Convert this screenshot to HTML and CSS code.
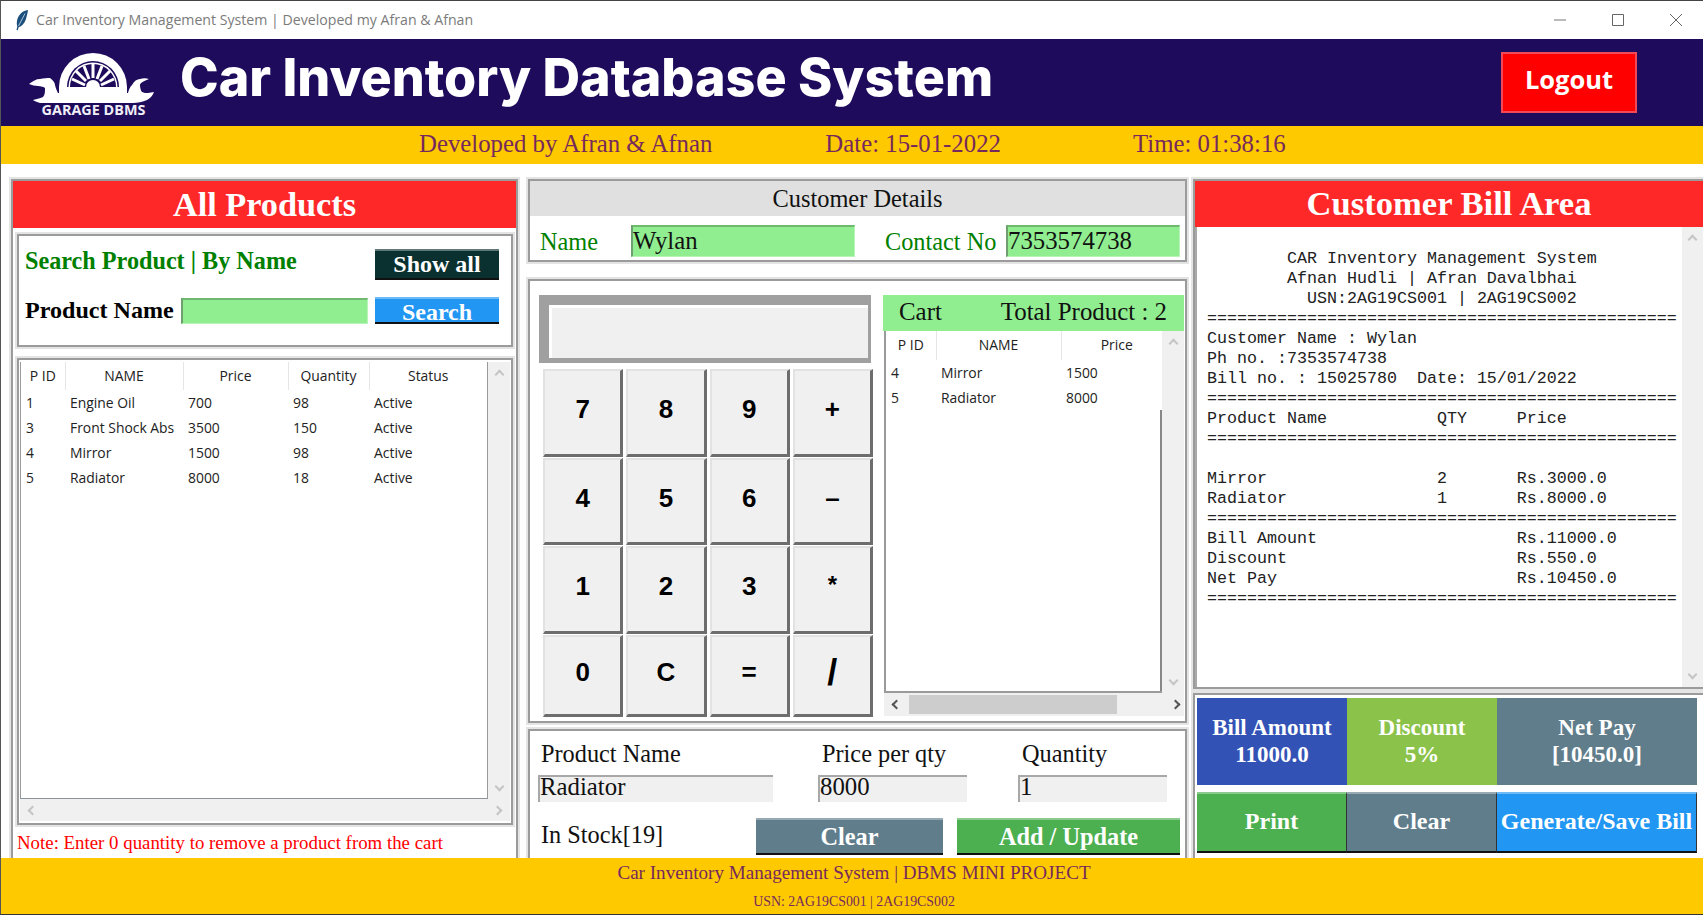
FILE: index.html
```html
<!DOCTYPE html>
<html lang="en">
<head>
    <meta charset="UTF-8">
    <meta name="viewport" content="width=device-width, initial-scale=1.0">
    <title>Car Inventory Management System</title>
    <link rel="stylesheet" href="styles.css">
</head>
<body>
    <div class="titlebar">
        <svg class="feather" width="14" height="22" viewBox="0 0 14 22">
            <path d="M13 1C7 2 3 6 2 12c-.4 2.400-.2 4 .3 5.500L1.500 21l1.300.3.800-3c3-1 6-4 7.400-8.300C11.800 6.500 12.800 3.500 13 1Z" fill="#1d4f7c"/>
            <path d="M10 4.500 3.500 17" stroke="#a9c6de" stroke-width="1" fill="none"/>
        </svg>
        <span class="titlebar-text">Car Inventory Management System | Developed my Afran &amp; Afnan</span>
        <div class="win-controls">
            <svg width="14" height="14" viewBox="0 0 14 14"><path d="M1 7h12" stroke="#777" fill="none"/></svg>
            <svg width="14" height="14" viewBox="0 0 14 14"><path d="M1.500 1.500h11v11h-11z" stroke="#666" fill="none"/></svg>
            <svg width="14" height="14" viewBox="0 0 14 14"><path d="M1 1l12 12M13 1 1 13" stroke="#666" fill="none"/></svg>
        </div>
    </div>

    <header class="header">
        <svg class="logo" width="135" height="77" viewBox="0 0 135 77">
            <path d="M34 42A34 34 0 0 1 102 42V52H34Z" fill="#fff"/>
            <path d="M42 42A26 26 0 0 1 94 42Z" fill="#1e0b5c"/>
            <path d="M43.500 42A24.500 24.500 0 0 1 92.500 42Z" fill="#fff"/>
            <path d="M45 42A23 23 0 0 1 91 42Z" fill="#1e0b5c"/>
            <g stroke="#fff" stroke-width="3" fill="none">
                <path d="M60 40 47 34M61 36 51 26M64 34 59 21M68 33V19M72 34 77 21M75 36 85 26M76 40 89 34"/>
            </g>
            <path d="M61 42a7 7 0 0 1 14 0Z" fill="#fff"/>
            <path d="M4 39C8 36 11 34 15 34C19 33 22 33 25 33C28 35 30 38 30 40C31 44 32 46 33 48H103C104 44 105 42 107 40C109 36 112 34 115 34C118 33 121 33 124 34C119 36 115 38 115 40C115 43 116 46 117 47C119 48 121 48 123 48L129 47C127 52 124 54 122 55C118 57 112 58 108 58H28C24 58 19 58 15 58C12 57 9 56 8 55C12 54 16 53 18 52C20 50 20 46 20 43C19 42 16 41 13 41C10 41 7 40 4 39Z" fill="#fff"/>
            <text x="68.500" y="70" class="logo-text" text-anchor="middle">GARAGE DBMS</text>
        </svg>
        <h1 class="app-title">Car Inventory Database System</h1>
        <button class="logout">Logout</button>
    </header>

    <div class="infobar">
        <span class="info-dev">Developed by Afran &amp; Afnan</span>
        <span class="info-date">Date: 15-01-2022</span>
        <span class="info-time">Time: 01:38:16</span>
    </div>

    <main class="main">
        <section class="frame col-left">
            <h2 class="panel-title">All Products</h2>
            <div class="frame search-box">
                <div class="search-row">
                    <span class="search-title">Search Product | By Name</span>
                    <button class="btn btn-dark">Show all</button>
                </div>
                <div class="search-row">
                    <label class="search-label">Product Name</label>
                    <input class="entry-green search-input" type="text">
                    <button class="btn btn-blue">Search</button>
                </div>
            </div>
            <div class="frame product-list">
                <div class="tree product-tree">
                    <table class="grid-table">
                        <colgroup>
                            <col class="col-a"><col class="col-b"><col class="col-c"><col class="col-d"><col>
                        </colgroup>
                        <thead>
                            <tr><th>P ID</th><th>NAME</th><th>Price</th><th>Quantity</th><th>Status</th></tr>
                        </thead>
                        <tbody>
                            <tr><td>1</td><td>Engine Oil</td><td>700</td><td>98</td><td>Active</td></tr>
                            <tr><td>3</td><td>Front Shock Abs</td><td>3500</td><td>150</td><td>Active</td></tr>
                            <tr><td>4</td><td>Mirror</td><td>1500</td><td>98</td><td>Active</td></tr>
                            <tr><td>5</td><td>Radiator</td><td>8000</td><td>18</td><td>Active</td></tr>
                        </tbody>
                    </table>
                </div>
                <div class="vscroll"><i class="chev up"></i><i class="chev down"></i></div>
                <div class="hscroll"><i class="chev left"></i><i class="chev right"></i></div>
            </div>
            <p class="note">Note: Enter 0 quantity to remove a product from the cart</p>
        </section>

        <div class="col-center">
            <section class="frame customer">
                <h3 class="customer-title">Customer Details</h3>
                <div class="customer-row">
                    <label class="cust-label name-label">Name</label>
                    <input class="entry-green name-input" type="text" value="Wylan">
                    <label class="cust-label contact-label">Contact No</label>
                    <input class="entry-green contact-input" type="text" value="7353574738">
                </div>
            </section>

            <section class="frame calc-cart">
                <div class="calc">
                    <input class="calc-display" type="text">
                    <div class="calc-keys">
                        <button class="key">7</button><button class="key">8</button><button class="key">9</button><button class="key">+</button>
                        <button class="key">4</button><button class="key">5</button><button class="key">6</button><button class="key">–</button>
                        <button class="key">1</button><button class="key">2</button><button class="key">3</button><button class="key key-star">*</button>
                        <button class="key">0</button><button class="key">C</button><button class="key">=</button><button class="key key-slash">/</button>
                    </div>
                </div>
                <div class="cart">
                    <div class="cart-head"><span>Cart</span><span>Total Product : 2</span></div>
                    <div class="cart-body">
                        <div class="tree cart-tree">
                            <table class="grid-table">
                                <colgroup><col class="cart-a"><col class="cart-b"><col></colgroup>
                                <thead><tr><th>P ID</th><th>NAME</th><th>Price</th></tr></thead>
                                <tbody>
                                    <tr><td>4</td><td>Mirror</td><td>1500</td></tr>
                                    <tr><td>5</td><td>Radiator</td><td>8000</td></tr>
                                </tbody>
                            </table>
                        </div>
                        <div class="vscroll"><i class="chev up"></i><i class="chev down"></i></div>
                        <div class="hscroll active">
                            <i class="chev left"></i>
                            <span class="thumb"></span>
                            <i class="chev right"></i>
                        </div>
                    </div>
                </div>
            </section>

            <section class="frame cart-form">
                <div class="form-grid">
                    <label class="form-label">Product Name</label>
                    <label class="form-label">Price per qty</label>
                    <label class="form-label">Quantity</label>
                    <input class="entry-grey" type="text" value="Radiator">
                    <input class="entry-grey" type="text" value="8000">
                    <input class="entry-grey" type="text" value="1">
                </div>
                <div class="form-actions">
                    <span class="form-label stock">In Stock[19]</span>
                    <button class="btn btn-grey form-clear">Clear</button>
                    <button class="btn btn-green form-add">Add / Update</button>
                </div>
            </section>
        </div>

        <div class="col-right">
            <section class="frame bill">
                <h2 class="panel-title bill-title">Customer Bill Area</h2>
                <div class="bill-body">
<pre class="bill-text">        CAR Inventory Management System
        Afnan Hudli | Afran Davalbhai
          USN:2AG19CS001 | 2AG19CS002
===============================================
Customer Name : Wylan
Ph no. :7353574738
Bill no. : 15025780  Date: 15/01/2022
===============================================
Product Name           QTY     Price
===============================================

Mirror                 2       Rs.3000.0
Radiator               1       Rs.8000.0
===============================================
Bill Amount                    Rs.11000.0
Discount                       Rs.550.0
Net Pay                        Rs.10450.0
===============================================</pre>
                    <div class="vscroll"><i class="chev up"></i><i class="chev down"></i></div>
                </div>
            </section>
            <section class="frame totals">
                <div class="totals-grid">
                    <div class="total total-blue">Bill Amount<br>11000.0</div>
                    <div class="total total-lime">Discount<br>5%</div>
                    <div class="total total-grey">Net Pay<br>[10450.0]</div>
                    <button class="btn btn-green">Print</button>
                    <button class="btn btn-grey">Clear</button>
                    <button class="btn btn-blue">Generate/Save Bill</button>
                </div>
            </section>
        </div>
    </main>

    <footer class="footer">
        <p class="footer-main">Car Inventory Management System | DBMS MINI PROJECT</p>
        <p class="footer-sub">USN: 2AG19CS001 | 2AG19CS002</p>
    </footer>
</body>
</html>
```

FILE: styles.css
```css
* {
    box-sizing: border-box;
}
html, body {
    margin: 0;
    padding: 0;
}
body {
    width: 1703px;
    height: 915px;
    overflow: hidden;
    display: flex;
    flex-direction: column;
    background: #fff;
    border-top: 1px solid #444;
    border-left: 1px solid #555;
    border-bottom: 1px solid #333;
    font-family: "Liberation Serif", serif;
    position: relative;
}
body::before {
    content: "";
    position: absolute;
    top: -1px;
    left: 800px;
    width: 60px;
    height: 1px;
    background: #21b67f;
}

/* window title */
.titlebar {
    height: 38px;
    flex: none;
    display: flex;
    align-items: center;
    padding-left: 14px;
    color: #7b7b7b;
    font-family: "Open Sans", sans-serif;
    font-size: 14.150px;
}
.titlebar-text {
    margin-left: 7px;
    padding-bottom: 2px;
}
.win-controls {
    margin-left: auto;
    display: flex;
    gap: 44px;
    padding-right: 20px;
}

/* header */
.header {
    height: 87px;
    flex: none;
    display: flex;
    align-items: center;
    background: #1e0b5c;
    position: relative;
    padding-left: 24px;
}
.logo {
    flex: none;
    margin-top: 1px;
}
.logo-text {
    font-family: "Open Sans", sans-serif;
    font-weight: 700;
    font-size: 14.400px;
    fill: #f0eef6;
}
.app-title {
    margin: 0 0 10px 20px;
    color: #fff;
    font-family: Inter, sans-serif;
    font-weight: 800;
    font-size: 52px;
    white-space: nowrap;
}
.logout {
    position: absolute;
    left: 1500px;
    top: 13px;
    width: 136px;
    height: 61px;
    background: #fe0000;
    border: 2px solid #f14a56;
    color: #fff;
    font-family: "Open Sans", sans-serif;
    font-weight: 700;
    font-size: 25.500px;
    padding: 0 0 8px;
}
.infobar {
    height: 38px;
    flex: none;
    background: #ffc900;
    color: #76295c;
    font-size: 24.800px;
    display: flex;
    align-items: center;
    line-height: 1;
    padding-bottom: 2px;
}
.info-dev {
    margin-left: 418px;
}
.info-date {
    margin-left: 113px;
}
.info-time {
    margin-left: 132px;
}

/* main area */
.main {
    height: 694px;
    flex: none;
    display: flex;
    align-items: flex-start;
    padding: 15px 0 0 10px;
    overflow: hidden;
}
.frame {
    border: 2px solid #9b9b9b;
    box-shadow: 0 0 0 2px #e4e4e4;
    background: #fff;
}
.col-left {
    width: 507px;
    height: 700px;
    margin-right: 10px;
    flex: none;
    padding: 0 0;
}
.col-center {
    width: 659px;
    margin-right: 6px;
    flex: none;
}
.col-right {
    width: 510px;
    flex: none;
}
.panel-title {
    margin: 0;
    height: 47px;
    background: #ff2828;
    color: #fff;
    text-align: center;
    font-size: 34.300px;
    line-height: 47px;
    font-weight: 700;
}

/* search */
.search-box {
    margin: 6px 3px 0 4px;
    height: 113px;
    padding: 13px 12px 0 6px;
}
.search-row {
    display: flex;
    align-items: center;
    height: 27px;
    margin-bottom: 17px;
}
.search-row:first-child {
    height: 31px;
}
.search-title {
    color: #008000;
    font-weight: 700;
    font-size: 24.200px;
    width: 350px;
    padding-bottom: 8px;
    white-space: nowrap;
}
.search-label {
    color: #000;
    font-weight: 700;
    font-size: 24.100px;
    width: 156px;
    white-space: nowrap;
}
.search-input {
    width: 187px;
    height: 26px;
    margin-right: 7px;
}
.btn {
    font-family: "Liberation Serif", serif;
    font-weight: 700;
    color: #fff;
    border: 0;
    border-top: 2px solid rgba(255, 255, 255, 0.35);
    border-bottom: 2px solid #111;
    padding: 0;
    font-size: 24.300px;
    white-space: nowrap;
}
.search-row .btn {
    width: 124px;
    height: 100%;
    font-size: 24px;
    margin-left: auto;
}
.search-row .btn-blue {
    padding-bottom: 4px;
}
.btn-dark {
    background: #0a3130;
}
.btn-blue {
    background: #2196f3;
}
.btn-grey {
    background: #607d8b;
}
.btn-green {
    background: #4caf50;
}
.entry-green {
    background: #90ee90;
    border: 0;
    border-top: 2px solid #6fb86f;
    border-left: 2px solid #6f9f6f;
    border-right: 1px solid #b8f4b8;
    border-bottom: 1px solid #b8f4b8;
    padding: 0;
    font-family: "Liberation Serif", serif;
    font-size: 24.800px;
    color: #111;
    outline: none;
}
.entry-grey {
    background: #f0f0f0;
    border: 0;
    border-top: 2px solid #a8a8a8;
    border-left: 2px solid #a8a8a8;
    padding: 0 0 5px;
    width: 100%;
    height: 27px;
    font-family: "Liberation Serif", serif;
    font-size: 24.800px;
    color: #111;
    outline: none;
}

/* treeview */
.product-list {
    margin: 11px 3px 0 4px;
    height: 467px;
    display: grid;
    grid-template-columns: 468px 22px;
    grid-template-rows: 437px 22px;
    padding: 2px 0 0 1px;
}
.tree {
    background: #fff;
    border-left: 1px solid #9a9a9a;
    border-bottom: 1px solid #8a949c;
    border-right: 1px solid #9a9a9a;
    overflow: hidden;
}
.grid-table {
    border-collapse: collapse;
    table-layout: fixed;
    width: 100%;
    font-family: "Open Sans", sans-serif;
    font-size: 13.900px;
    color: #222;
}
.grid-table th {
    font-weight: 400;
    height: 28px;
    border-right: 1px solid #e6e6e6;
    padding: 0 0 2px;
}
.grid-table th:last-child {
    border-right: 0;
}
.grid-table td {
    height: 25px;
    padding: 0 0 0 5px;
    white-space: nowrap;
}
.col-a {
    width: 44px;
}
.col-b {
    width: 118px;
}
.col-c {
    width: 105px;
}
.col-d {
    width: 81px;
}
.vscroll {
    background: #f0f0f0;
    display: flex;
    flex-direction: column;
    justify-content: space-between;
    align-items: center;
    padding: 9px 0;
}
.hscroll {
    grid-column: 1 / -1;
    background: #f0f0f0;
    display: flex;
    justify-content: space-between;
    align-items: center;
    padding: 0 9px;
}
.chev {
    display: block;
    width: 7px;
    height: 7px;
    border-top: 2px solid #c4c4c4;
    border-left: 2px solid #c4c4c4;
}
.chev.up {
    transform: rotate(45deg);
}
.chev.down {
    transform: rotate(225deg);
}
.chev.left {
    transform: rotate(-45deg);
}
.chev.right {
    transform: rotate(135deg);
}
.note {
    margin: 7px 0 0 4px;
    color: #ff0000;
    font-size: 18.850px;
    line-height: 22px;
    white-space: nowrap;
}

/* customer */
.customer {
    height: 83px;
}
.customer-title {
    margin: 0;
    height: 35px;
    background: #e0e0e0;
    text-align: center;
    font-weight: 400;
    font-size: 24.400px;
    line-height: 35px;
    color: #111;
}
.customer-row {
    display: flex;
    align-items: center;
    padding: 9px 0 0 10px;
    height: 41px;
}
.customer-row input {
    height: 32px;
    line-height: 28px;
    padding-bottom: 2px;
}
.cust-label {
    color: #008000;
    font-size: 24.300px;
    padding-top: 1px;
}
.name-label {
    width: 91px;
}
.name-input {
    width: 224px;
}
.contact-label {
    width: 121px;
    margin-left: 30px;
    white-space: nowrap;
}
.contact-input {
    width: 174px;
}

/* calculator and cart */
.calc-cart {
    height: 444px;
    margin-top: 17px;
    display: flex;
    padding: 14px 0 0 9px;
}
.calc {
    width: 344px;
    flex: none;
}
.calc-display {
    display: block;
    width: 332px;
    height: 68px;
    background: #f0f0f0;
    border-style: solid;
    border-color: #a0a0a0;
    border-width: 10px 3px 5px 10px;
    box-shadow: inset 3px 3px 0 #fff;
    outline: none;
}
.calc-keys {
    margin: 6px 0 0 4px;
    width: 330px;
    display: grid;
    grid-template-columns: repeat(4, 1fr);
    grid-template-rows: 88px 87px 88px 82px;
    column-gap: 3px;
    row-gap: 1px;
}
.key {
    background: #f0f0f0;
    border: 2px solid #e2e2e2;
    border-right: 3px solid #6d6d6d;
    border-bottom: 3px solid #6d6d6d;
    font-family: "Liberation Sans", sans-serif;
    font-weight: 700;
    font-size: 26px;
    color: #000;
    padding: 0 0 6px;
}
.key-slash {
    font-size: 36px;
}
.key-star {
    font-size: 24px;
    padding-bottom: 9px;
}
.cart {
    width: 301px;
    flex: none;
}
.cart-head {
    height: 36px;
    background: #90ee90;
    display: flex;
    justify-content: space-between;
    align-items: center;
    padding: 0 17px 2px 16px;
    font-size: 24.900px;
    color: #111;
}
.cart-body {
    display: grid;
    grid-template-columns: 278px 22px;
    grid-template-rows: 362px 23px;
    margin-left: 1px;
}
.cart-tree {
    border-left: 2px solid #9a9a9a;
    border-bottom: 2px solid #9a9a9a;
    border-right: 0;
    position: relative;
}
.cart-tree::after {
    content: "";
    position: absolute;
    top: 79px;
    right: 0;
    bottom: 0;
    width: 2px;
    background: #888;
}
.cart-tree th {
    height: 29px;
}
.cart-tree th:last-child {
    padding-left: 10px;
}
.cart-a {
    width: 50px;
}
.cart-b {
    width: 125px;
}
.hscroll.active {
    padding: 0 5px 0 9px;
}
.hscroll.active .chev {
    border-color: #555;
}
.thumb {
    width: 208px;
    height: 19px;
    background: #cdcdcd;
    margin-right: 46px;
}

/* cart form */
.cart-form {
    height: 140px;
    margin-top: 6px;
    padding: 9px 0 0 8px;
}
.form-grid {
    display: grid;
    grid-template-columns: 235px 149px 149px;
    column-gap: 45px;
    grid-template-rows: 35px 27px;
    row-gap: 0;
}
.form-grid > :nth-child(3),
.form-grid > :nth-child(6) {
    margin-left: 6px;
}
.form-grid .form-label:nth-child(2) {
    padding-left: 4px;
}
.form-grid .form-label:nth-child(3) {
    padding-left: 4px;
}
.form-grid .form-label {
    line-height: 28px;
}
.form-label {
    font-size: 24.300px;
    color: #111;
    padding-left: 3px;
    line-height: 32px;
}
.form-actions {
    display: flex;
    align-items: flex-start;
    margin-top: 16px;
}
.stock {
    width: 218px;
    padding-top: 1px;
}
.form-clear {
    width: 187px;
    height: 37px;
    margin-right: 14px;
}
.form-add {
    width: 223px;
    height: 37px;
}

/* bill */
.col-right .frame {
    border-right: 0;
}
.bill {
    height: 510px;
    border-bottom: 2px solid #9b9b9b;
}
.bill-title {
    height: 46px;
    line-height: 44px;
    font-size: 34.600px;
}
.bill-body {
    display: flex;
    height: 460px;
    border-left: 2px solid #a8a8a8;
}
.bill-text {
    flex: 1;
    margin: 0;
    padding: 22px 0 0 10px;
    font-family: "Liberation Mono", monospace;
    font-size: 16.670px;
    line-height: 20px;
    color: #222;
    overflow: hidden;
}
.bill-body .vscroll {
    width: 21px;
    flex: none;
    padding: 9px 0;
}
.totals {
    height: 180px;
    margin-top: 4px;
    padding: 3px 0 0 2px;
}
.totals-grid {
    display: grid;
    grid-template-columns: 150px 150px 200px;
    grid-template-rows: 87px 61px;
    row-gap: 7px;
}
.total {
    color: #fff;
    font-weight: 700;
    font-size: 23px;
    line-height: 27px;
    text-align: center;
    padding-top: 16px;
}
.total-blue {
    background: #3352b5;
}
.total-lime {
    background: #8bc34a;
}
.total-grey {
    background: #607d8b;
}
.totals-grid .btn {
    border-right: 1px solid #333;
    padding-bottom: 2px;
    font-size: 24px;
}

/* footer */
.footer {
    height: 56px;
    flex: none;
    background: #ffc900;
    color: #76295c;
    text-align: center;
    position: relative;
    padding-left: 4px;
}
.footer p {
    margin: 0;
    white-space: nowrap;
}
.footer-main {
    font-size: 19.100px;
    line-height: 24px;
    padding-top: 3px;
}
.footer-sub {
    font-size: 13.850px;
    line-height: 18px;
    padding-top: 8px;
}
```
